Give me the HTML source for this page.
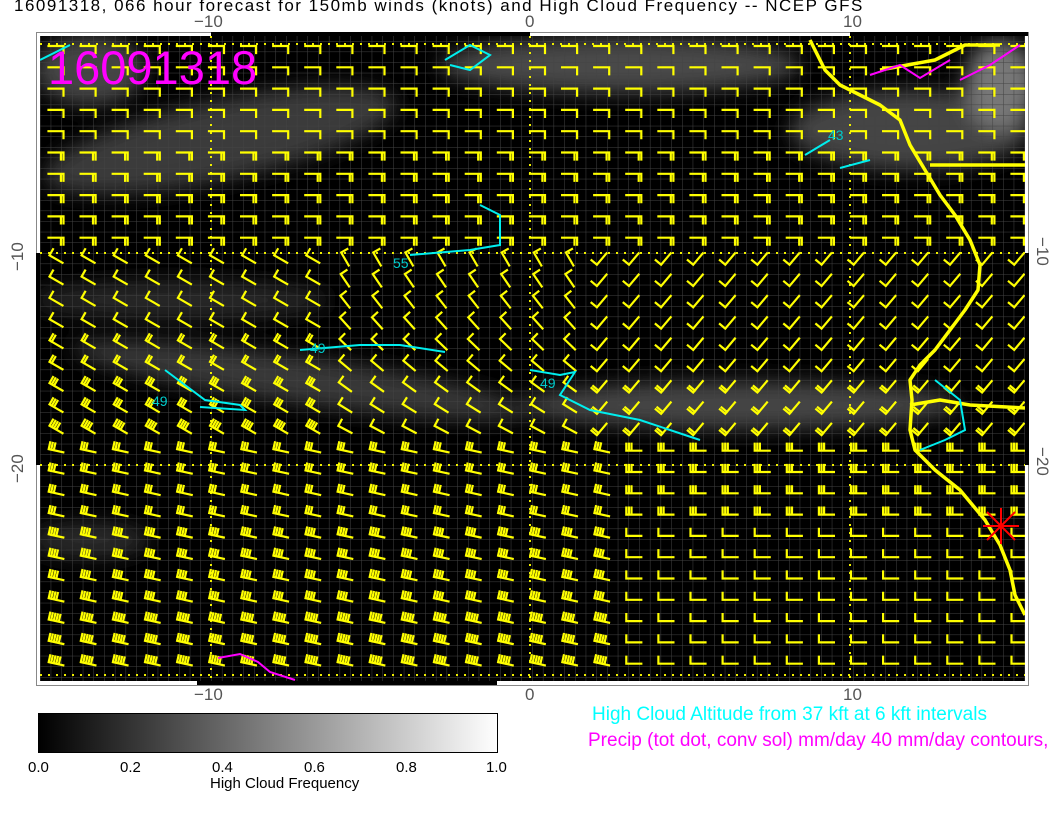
<!DOCTYPE html>
<html><head><meta charset="utf-8">
<style>
html,body{margin:0;padding:0;background:#fff;width:1056px;height:816px;overflow:hidden;font-family:"Liberation Sans",sans-serif}
.t{position:absolute;white-space:nowrap}
</style></head><body>
<div class="t" style="left:14px;top:-4px;font-size:17px;letter-spacing:1.5px;color:#000">16091318, 066 hour forecast for 150mb winds (knots) and High Cloud Frequency -- NCEP GFS</div>
<div class="t" style="left:194px;top:12px;font-size:17px;color:#555">−10</div>
<div class="t" style="left:525px;top:12px;font-size:17px;color:#555">0</div>
<div class="t" style="left:843px;top:12px;font-size:17px;color:#555">10</div>
<div class="t" style="left:194px;top:685px;font-size:17px;color:#555">−10</div>
<div class="t" style="left:525px;top:685px;font-size:17px;color:#555">0</div>
<div class="t" style="left:843px;top:685px;font-size:17px;color:#555">10</div>
<div class="t" style="left:8px;top:271px;font-size:17px;color:#555;transform:rotate(-90deg);transform-origin:0 0">−10</div>
<div class="t" style="left:8px;top:483px;font-size:17px;color:#555;transform:rotate(-90deg);transform-origin:0 0">−20</div>
<div class="t" style="left:1052px;top:237px;font-size:17px;color:#555;transform:rotate(90deg);transform-origin:0 0">−10</div>
<div class="t" style="left:1052px;top:447px;font-size:17px;color:#555;transform:rotate(90deg);transform-origin:0 0">−20</div>
<svg id="m" width="1056" height="816" style="position:absolute;left:0;top:0">
<defs>
<filter id="bl" x="-50%" y="-50%" width="200%" height="200%"><feGaussianBlur stdDeviation="10"/></filter>
<pattern id="gr" width="10.7" height="10.6" patternUnits="userSpaceOnUse" x="40" y="41"><path d="M0 0H10.7M0 0V10.6" stroke="#444" stroke-width="1" fill="none"/></pattern>
<linearGradient id="cb"><stop offset="0" stop-color="#000"/><stop offset="1" stop-color="#fff"/></linearGradient>
<clipPath id="cl"><rect x="40" y="36" width="985" height="645"/></clipPath>
</defs>
<rect x="36.5" y="32.5" width="992" height="653" fill="#fff" stroke="#888"/>
<rect x="211" y="32" width="319" height="4" fill="#000"/>
<rect x="850" y="32" width="178" height="4" fill="#000"/>
<rect x="197" y="681" width="300" height="4" fill="#000"/>
<rect x="36" y="253" width="4" height="212" fill="#000"/>
<rect x="1025" y="253" width="4" height="212" fill="#000"/>
<g clip-path="url(#cl)">
<rect x="40" y="36" width="985" height="645" fill="#000"/>
<g filter="url(#bl)">
<ellipse cx="220" cy="140" rx="180" ry="40" transform="rotate(-12 220 140)" fill="#3a3a3a"/>
<ellipse cx="620" cy="65" rx="180" ry="28" fill="#4a4a4a"/>
<ellipse cx="910" cy="130" rx="120" ry="40" fill="#444"/>
<ellipse cx="90" cy="70" rx="55" ry="35" fill="#444"/>
<ellipse cx="300" cy="380" rx="230" ry="24" transform="rotate(8 300 380)" fill="#383838"/>
<ellipse cx="740" cy="405" rx="220" ry="24" fill="#444"/>
<ellipse cx="180" cy="300" rx="150" ry="20" fill="#262626"/>
<ellipse cx="90" cy="540" rx="60" ry="18" fill="#2a2a2a"/>
<ellipse cx="1000" cy="85" rx="35" ry="45" fill="#777"/>
</g>
<rect x="40" y="36" width="985" height="645" fill="url(#gr)"/>
<g stroke="#ee0" stroke-width="2" stroke-dasharray="2 6" fill="none">
<path d="M211 36V681M530 36V681M850 36V681M40 44H1025M40 253H1025M40 465H1025M40 675H1025"/>
</g>
<g id="barbs" stroke="#ff0" stroke-width="2.2" fill="none" stroke-linecap="square"></g>
<g stroke="#ff0" stroke-width="3.5" fill="none" stroke-linejoin="round">
<path d="M810 40L825 70 840 85 860 95 880 105 900 120 910 145 925 170 940 195 955 215 970 240 980 265 978 290 965 310 950 330 935 350 920 365 910 380 912 400 910 430 915 450 935 470 960 490 985 520 1000 545 1010 570 1015 595 1025 615"/>
<path d="M910 405L940 400 970 405 1025 408"/>
<path d="M930 165L1025 165M880 70L935 60 965 45 1000 45"/>
</g>
<g stroke="#0ee" stroke-width="2" fill="none">
<path d="M40 60L70 45M445 60L470 45 490 55 470 70 450 65"/>
<path d="M410 255L470 250 500 245 500 215 480 205"/>
<path d="M300 350L360 345 400 345 445 352"/>
<path d="M165 370L205 400 240 405 245 410 200 407"/>
<path d="M530 370L560 375 575 372 560 395 590 410 640 420 700 440"/>
<path d="M805 155L830 140M840 168L870 160"/>
<path d="M935 380L960 400 965 430 945 440 920 450"/>
</g>
<g fill="#0cc" font-size="14" font-family="Liberation Sans"><text x="393" y="268">55</text><text x="310" y="353">49</text><text x="152" y="406">49</text><text x="540" y="388">49</text><text x="828" y="140">43</text></g>
<g stroke="#f0f" stroke-width="2" fill="none">
<path d="M218 658L240 654 258 662 270 672 295 680"/>
<path d="M870 75L900 65 920 78 950 60M960 80L990 65 1020 45"/>
</g>
<g stroke="#f00" stroke-width="2"><path d="M987 512L1015 540M1015 512L987 540M1001 508V544M983 526H1019"/></g>
</g>
<text x="48" y="84" font-size="47" fill="#f0f" font-family="Liberation Sans">16091318</text>
<rect x="38.5" y="713.5" width="459" height="39" fill="url(#cb)" stroke="#000"/>
</svg>
<div class="t" style="left:592px;top:704px;font-size:19px;color:#0ff">High Cloud Altitude from 37 kft at 6 kft intervals</div>
<div class="t" style="left:588px;top:730px;font-size:19px;color:#f0f">Precip (tot dot, conv sol) mm/day 40 mm/day contours,</div>
<div class="t" style="left:28px;top:759px;font-size:15px">0.0</div>
<div class="t" style="left:120px;top:759px;font-size:15px">0.2</div>
<div class="t" style="left:212px;top:759px;font-size:15px">0.4</div>
<div class="t" style="left:304px;top:759px;font-size:15px">0.6</div>
<div class="t" style="left:396px;top:759px;font-size:15px">0.8</div>
<div class="t" style="left:486px;top:759px;font-size:15px">1.0</div>
<div class="t" style="left:210px;top:775px;font-size:15px">High Cloud Frequency</div>
<script>
var g=document.getElementById('barbs'),s='';
for(var r=0;r<30;r++){for(var c=0;c<31;c++){
 var x=56+c*32.1,y=46+r*21.3,a,n;
 if(r<10){a=180;n=(r>4?2:1);}
 else if(r<19){ if(x<340){a=30;n=1+Math.max(0,r-12>>1);} else if(x<600){a=60+(r-10)*-4;n=1;} else {a=-50;n=(r>15?2:1);} }
 else { if(x<620){a=12;n=Math.min(6,3+((r-19)>>2));} else {a=0;n=(r<23?3:1);} }
 var ar=a*Math.PI/180,L=15,dx=Math.cos(ar),dy=Math.sin(ar);
 var ex=x-dx*L/2,ey=y-dy*L/2,tx=x+dx*L/2,ty=y+dy*L/2;
 var px=Math.sin(ar),py=-Math.cos(ar);
 s+='<path d="M'+ex.toFixed(1)+' '+ey.toFixed(1)+'L'+tx.toFixed(1)+' '+ty.toFixed(1);
 for(var k=0;k<n;k++){var bx=ex+dx*k*2.6,by=ey+dy*k*2.6;
  s+='M'+bx.toFixed(1)+' '+by.toFixed(1)+'l'+(px*7).toFixed(1)+' '+(py*7).toFixed(1);}
 s+='"/>';}}
g.innerHTML=s;
</script>
</body></html>
